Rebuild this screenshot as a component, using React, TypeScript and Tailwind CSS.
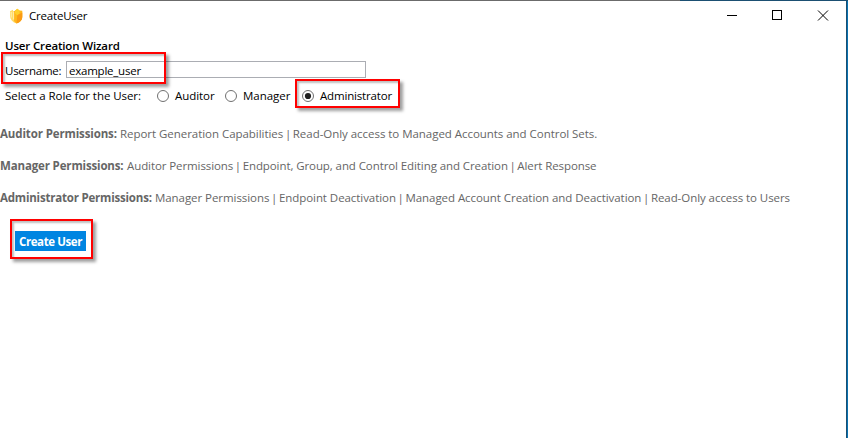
import type { ReactNode } from "react";

const PERMISSIONS = [
  { role: "Auditor Permissions:", roleClass: "w-[120px] tracking-[-0.12px]", items: ["Report Generation Capabilities", "Read-Only access to Managed Accounts and Control Sets."], textClass: "tracking-[-0.04px]" },
  { role: "Manager Permissions:", roleClass: "w-[127px] tracking-[-0.15px]", items: ["Auditor Permissions", "Endpoint, Group, and Control Editing and Creation", "Alert Response"], textClass: "tracking-[-0.09px]" },
  { role: "Administrator Permissions:", roleClass: "w-[155px] tracking-[-0.2px]", items: ["Manager Permissions", "Endpoint Deactivation", "Managed Account Creation and Deactivation", "Read-Only access to Users"], textClass: "tracking-[-0.06px]" },
];

function ShieldIcon() {
  return (
    <svg width="14" height="16" viewBox="0 0 14 16">
      <path d="M1 3.2 4 1.8v9.8l3 3.6C3.5 14 1.2 11.6 1 8.2Z" fill="#ffdc68" />
      <path d="M4.2 3.5 6 2.7 8.3.8l2.2 1.6 2.8.4v6.2c0 3.2-2.3 5.2-5.8 6.5-2.2-1.2-3.3-2.8-3.3-5Z" fill="#ffb81c" />
      <path d="m6 2.7 2.3-1.9 2.2 1.6v3L8.3 7.2 6 5.3Z" fill="#ffd02c" />
      <path d="m8.3 7.2 5-2.8V9c0 3.2-2.3 5.2-5.8 6.5Z" fill="#fb9b14" />
      <path d="M2.2 4v5.5M4.6 4v7.5" stroke="#fff3bd" strokeWidth=".9" />
    </svg>
  );
}

function Radio({ label, checked, className, labelClass }: { label: ReactNode; checked?: boolean; className: string; labelClass: string }) {
  return (
    <label className={`flex items-center gap-[6px] ${className}`}>
      <svg width="12" height="12" viewBox="0 0 12 12" className="shrink-0">
        <circle cx="6" cy="6" r="5.5" fill="#fff" stroke="#707070" />
        {checked && <circle cx="6" cy="6" r="3.1" fill="#212121" />}
      </svg>
      <span className={labelClass}>{label}</span>
    </label>
  );
}

function Highlight({ className }: { className: string }) {
  return <div className={`pointer-events-none absolute border-2 border-[#ff0000] shadow-[3px_3px_3px_rgba(0,0,0,0.38),inset_2px_2px_2px_rgba(0,0,0,0.25)] ${className}`} />;
}

export default function App() {
  return (
    <div className="relative flex h-[438px] w-[848px] flex-col overflow-hidden bg-white font-['Open_Sans','Noto_Sans',sans-serif] text-[11.5px] leading-[16px] whitespace-nowrap text-black">
      <div className="flex h-px shrink-0">
        <div className="w-[680px] bg-[#6b6b6b]" />
        <div className="flex-1 bg-[#1b4f72]" />
      </div>
      <div className="flex min-h-0 flex-1">
        <main className="flex w-[846px] flex-col">
          <header className="flex h-[29px] items-center pl-[9px]">
            <ShieldIcon />
            <h1 className="ml-[6px] flex-1 pt-px tracking-[-0.2px]">CreateUser</h1>
            <svg width="102" height="11" viewBox="0 0 102 11" className="mr-[17px]" shapeRendering="crispEdges" fill="none" stroke="#000">
              <path d="M0 5.5h10M45.5.5h9v9h-9z" />
              <path d="m91 .5 10 10m0-10-10 10" shapeRendering="auto" />
            </svg>
          </header>
          <h2 className="mt-[8px] pl-[5px] font-semibold tracking-[-0.15px]">User Creation Wizard</h2>
          <div className="mt-[7px] flex h-[17px] items-center pl-[5px]">
            <label className="w-[61px] pt-[2px] tracking-[-0.25px]">Username:</label>
            <div className="flex h-[17px] w-[300px] items-center border border-[#abadb3] pl-[2px]">
              <span className="pt-[2px] tracking-[-0.23px]">example_user</span>
            </div>
          </div>
          <div className="mt-[10px] flex h-[16px] items-center pl-[5px]">
            <span className="w-[152px] tracking-[-0.06px]">Select a Role for the User:</span>
            <Radio label="Auditor" className="w-[68px]" labelClass="tracking-[-0.05px]" />
            <Radio label="Manager" className="w-[77px]" labelClass="tracking-[-0.03px]" />
            <Radio label="Administrator" checked className="w-[92px]" labelClass="tracking-[-0.17px]" />
          </div>
          <section className="mt-[22px] flex flex-col gap-4 text-[#666]">
            {PERMISSIONS.map((item) => (
              <p key={item.role} className="flex">
                <strong className={`shrink-0 font-bold ${item.roleClass}`}>{item.role}</strong>
                <span className={item.textClass}>
                  {item.items.map((text, i) => (
                    <span key={text}>
                      {i > 0 && <span className="mx-[-1.3px]">{" | "}</span>}
                      {text}
                    </span>
                  ))}
                </span>
              </p>
            ))}
          </section>
          <button className="mt-[25px] ml-[15px] flex h-[20px] w-[71px] items-center justify-center bg-[#0085e1] pt-[2px] font-bold tracking-[-0.4px] text-white">Create User</button>
        </main>
        <div className="w-px bg-[#1b4f72]" />
        <div className="w-px bg-[#0872b0]" />
      </div>
      <Highlight className="top-[52px] left-[1px] h-[32px] w-[165px]" />
      <Highlight className="top-[79px] left-[295px] h-[29px] w-[105px]" />
      <Highlight className="top-[219px] left-[10px] h-[40px] w-[83px]" />
    </div>
  );
}
